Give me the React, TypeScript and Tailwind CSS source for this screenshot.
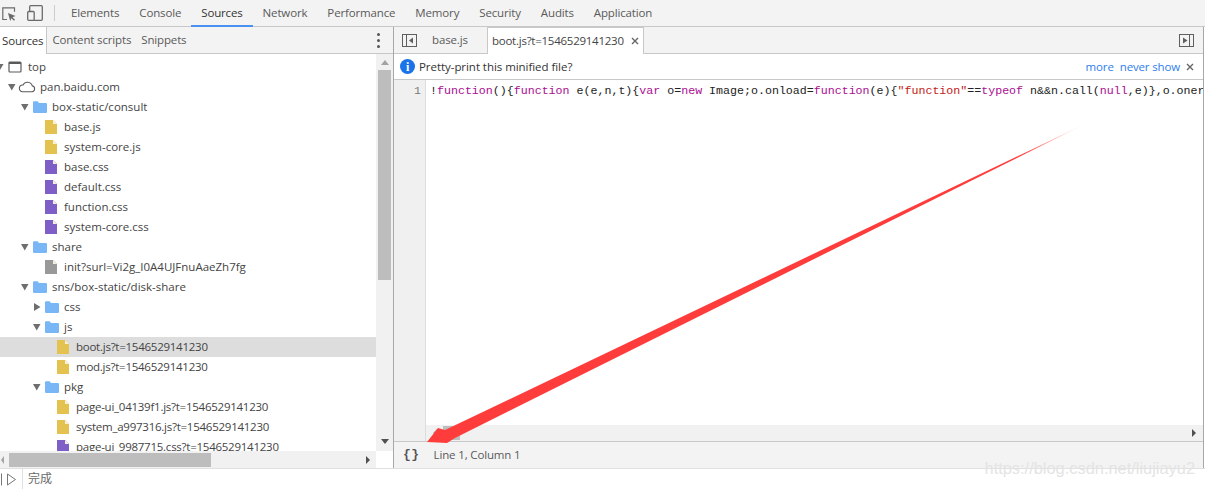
import React from 'react'

const tabs = ['Elements', 'Console', 'Sources', 'Network', 'Performance', 'Memory', 'Security', 'Audits', 'Application']

type Row = { depth: number; kind: string; label: string; arrow?: 'down' | 'right'; selected?: boolean }

const rows: Row[] = [
  { depth: 0, kind: 'frame', label: 'top', arrow: 'down' },
  { depth: 1, kind: 'cloud', label: 'pan.baidu.com', arrow: 'down' },
  { depth: 2, kind: 'folder', label: 'box-static/consult', arrow: 'down' },
  { depth: 3, kind: 'js', label: 'base.js' },
  { depth: 3, kind: 'js', label: 'system-core.js' },
  { depth: 3, kind: 'css', label: 'base.css' },
  { depth: 3, kind: 'css', label: 'default.css' },
  { depth: 3, kind: 'css', label: 'function.css' },
  { depth: 3, kind: 'css', label: 'system-core.css' },
  { depth: 2, kind: 'folder', label: 'share', arrow: 'down' },
  { depth: 3, kind: 'doc', label: 'init?surl=Vi2g_I0A4UJFnuAaeZh7fg' },
  { depth: 2, kind: 'folder', label: 'sns/box-static/disk-share', arrow: 'down' },
  { depth: 3, kind: 'folder', label: 'css', arrow: 'right' },
  { depth: 3, kind: 'folder', label: 'js', arrow: 'down' },
  { depth: 4, kind: 'js', label: 'boot.js?t=1546529141230', selected: true },
  { depth: 4, kind: 'js', label: 'mod.js?t=1546529141230' },
  { depth: 3, kind: 'folder', label: 'pkg', arrow: 'down' },
  { depth: 4, kind: 'js', label: 'page-ui_04139f1.js?t=1546529141230' },
  { depth: 4, kind: 'js', label: 'system_a997316.js?t=1546529141230' },
  { depth: 4, kind: 'css', label: 'page-ui_9987715.css?t=1546529141230' },
]

const fileColors: Record<string, string> = {
  js: '#e3c24f',
  css: '#7e5ec7',
  doc: '#999999',
}

const TreeIcon = ({ kind }: { kind: string }) => {
  if (kind === 'frame') {
    return (
      <svg width="14" height="12" viewBox="0 0 14 12" className="shrink-0">
        <rect x="1" y="1" width="12" height="10" rx="1" fill="none" stroke="#5a5a5a" strokeWidth="1.2" />
        <rect x="1" y="1" width="12" height="2" fill="#5a5a5a" />
      </svg>
    )
  }
  if (kind === 'cloud') {
    return (
      <svg width="18" height="12" viewBox="0 0 18 12" className="-ml-[2px] shrink-0">
        <path
          d="M4.5 10.8h9.5a3 3 0 0 0 .3-5.9A5 5 0 0 0 5 4a3.4 3.4 0 0 0-.5 6.8z"
          fill="none"
          stroke="#5a5a5a"
          strokeWidth="1.1"
        />
      </svg>
    )
  }
  if (kind === 'folder') {
    return (
      <svg width="14" height="12" viewBox="0 0 14 12" className="shrink-0">
        <path d="M0 1.2a1 1 0 0 1 1-1h3.6L6 2h7a1 1 0 0 1 1 1v8a1 1 0 0 1-1 1H1a1 1 0 0 1-1-1z" fill="#78b6f5" />
      </svg>
    )
  }
  return (
    <svg width="12" height="14" viewBox="0 0 12 14" className="shrink-0">
      <path d="M0 0h8l4 4v10H0z" fill={fileColors[kind]} />
      <path d="M8 0l4 4H8z" fill="#f6f0dc" />
    </svg>
  )
}

const Caret = ({ dir }: { dir?: 'down' | 'right' }) => {
  if (!dir) return <span className="w-[12px] shrink-0" />
  return (
    <svg width="8" height="8" viewBox="0 0 8 8" className="mr-[4px] shrink-0">
      {dir === 'down' ? <path d="M0 1h7.5L3.75 7.5z" fill="#6e6e6e" /> : <path d="M1 0v8l6.5-4z" fill="#6e6e6e" />}
    </svg>
  )
}

const TreeRow = ({ row }: { row: Row }) => {
  const indents = ['-ml-[4px]', 'pl-[8px]', 'pl-[21px]', 'pl-[33px]', 'pl-[33px]']
  const labelGap: Record<string, string> = { folder: 'ml-[5px]', frame: 'ml-[6px]', cloud: 'ml-[4px]' }
  // labels full of digits run narrower than plain ones
  const spacing = row.label.includes('?t=') ? 'tracking-[-0.25px]' : 'tracking-[0px]'
  return (
    <div className={`flex h-[20px] shrink-0 items-center whitespace-nowrap ${indents[row.depth]} ${row.selected ? 'bg-[#dddddd]' : ''}`}>
      {row.depth === 4 && <span className="w-[12px] shrink-0" />}
      <Caret dir={row.arrow} />
      <TreeIcon kind={row.kind} />
      <span className={`${labelGap[row.kind] ?? 'ml-[7px]'} ${spacing} text-[#444444]`}>{row.label}</span>
    </div>
  )
}

export default function App() {
  return (
    <div className="relative flex h-[489px] w-[1205px] flex-col overflow-hidden bg-white font-['Open_Sans','Noto_Sans_CJK_SC',sans-serif] text-[11.5px] tracking-[-0.15px] text-[#5a5a5a]">
      {/* main tab bar */}
      <div className="flex h-[27px] shrink-0 items-stretch border-b border-[#c8c8c8] bg-[#f3f3f3]">
        <div className="flex w-[54px] items-center gap-[11px] pl-[2px]">
          <svg width="14" height="14" viewBox="0 0 14 14" className="mt-[1px]">
            <path d="M5 12.5H0.8V0.8h11.7v4" fill="none" stroke="#6a6a6a" strokeWidth="1.2" />
            <path d="M6 6l7.5 3-3 1.2 2.5 2.6-1 1-2.6-2.6-1.2 2.9z" fill="#6a6a6a" />
          </svg>
          <svg width="16" height="16" viewBox="0 0 16 16">
            <rect x="2.7" y="0.7" width="12.6" height="14.6" rx="1" fill="none" stroke="#6a6a6a" strokeWidth="1.3" />
            <rect x="0.7" y="6.5" width="6.5" height="8.8" rx="1" fill="#f3f3f3" stroke="#6a6a6a" strokeWidth="1.3" />
          </svg>
        </div>
        <div className="my-[5px] w-px bg-[#cccccc]" />
        <div className="ml-[6px] flex items-stretch">
          {tabs.map((t) => (
            <div
              key={t}
              className={`-mb-px flex items-center border-b-2 px-[10px] ${t === 'Sources' ? 'border-[#4a90f0] text-[#333333]' : 'border-transparent'}`}
            >
              {t}
            </div>
          ))}
        </div>
      </div>

      <div className="flex min-h-0 flex-1">
        {/* navigator */}
        <div className="flex w-[394px] shrink-0 flex-col border-r border-[#a8a8a8]">
          <div className="flex h-[27px] shrink-0 items-stretch border-b border-[#c8c8c8] bg-[#f3f3f3]">
            <div className="-mb-px flex items-center border-r border-[#c8c8c8] bg-white pl-[2px] pr-[3px] text-[#333333]">Sources</div>
            <div className="flex items-center px-[5px]">Content scripts</div>
            <div className="flex items-center px-[5px]">Snippets</div>
            <div className="ml-auto mr-[13px] flex flex-col justify-center gap-[3px]">
              <span className="size-[3px] rounded-full bg-[#555555]" />
              <span className="size-[3px] rounded-full bg-[#555555]" />
              <span className="size-[3px] rounded-full bg-[#555555]" />
            </div>
          </div>
          <div className="flex min-h-0 flex-1">
            <div className="flex min-w-0 flex-1 flex-col">
              <div className="flex min-h-0 flex-1 flex-col overflow-hidden pt-[3px]">
                {rows.map((r) => (
                  <TreeRow key={r.label + r.depth} row={r} />
                ))}
              </div>
              <div className="flex h-[17px] shrink-0 items-center bg-[#f1f1f1]">
                <svg width="9" height="8" viewBox="0 0 9 8" className="shrink-0">
                  <path d="M1 4l3-4v8z" fill="#a3a3a3" />
                </svg>
                <div className="h-[14px] w-[202px] bg-[#bdbdbd]" />
                <svg width="6" height="8" viewBox="0 0 6 8" className="ml-auto mr-[5px]">
                  <path d="M1 0l4 4-4 4z" fill="#505050" />
                </svg>
              </div>
            </div>
            <div className="flex w-[17px] shrink-0 flex-col bg-white">
              <div className="flex flex-1 flex-col items-center bg-[#f1f1f1]">
                <svg width="8" height="6" viewBox="0 0 8 6" className="mt-[6px] shrink-0">
                  <path d="M4 0l4 5H0z" fill="#a3a3a3" />
                </svg>
                <div className="mt-[4px] h-[210px] w-[13px] bg-[#bdbdbd]" />
                <svg width="8" height="6" viewBox="0 0 8 6" className="mb-[6px] mt-auto shrink-0">
                  <path d="M0 0h8L4 5z" fill="#505050" />
                </svg>
              </div>
              <div className="h-[17px] shrink-0" />
            </div>
          </div>
        </div>

        {/* editor */}
        <div className="mr-px flex min-w-0 flex-1 flex-col border-r border-[#a8a8a8]">
          <div className="flex h-[27px] shrink-0 items-stretch border-b border-[#c8c8c8] bg-[#f3f3f3]">
            <svg width="15" height="13" viewBox="0 0 15 13" className="ml-[8px] self-center">
              <rect x="0.5" y="0.5" width="14" height="12" fill="none" stroke="#5f5f5f" />
              <path d="M4.5 0.5v12" stroke="#5f5f5f" />
              <path d="M11 3.5v6l-4-3z" fill="#5f5f5f" />
            </svg>
            <div className="ml-[7px] flex w-[63px] items-center pl-[8px]">base.js</div>
            <div className="-mb-px flex items-center gap-[7px] border-x border-t border-[#c8c8c8] bg-white pl-[4px] pr-[4px] tracking-[-0.25px] text-[#444444]">
              boot.js?t=1546529141230
              <svg width="8" height="8" viewBox="0 0 8 8">
                <path d="M1 1l6 6M7 1l-6 6" stroke="#666666" strokeWidth="1.4" />
              </svg>
            </div>
            <svg width="15" height="13" viewBox="0 0 15 13" className="ml-auto mr-[9px] self-center">
              <rect x="0.5" y="0.5" width="14" height="12" fill="none" stroke="#5f5f5f" />
              <path d="M10.5 0.5v12" stroke="#5f5f5f" />
              <path d="M4 3.5v6l4.5-3z" fill="#5f5f5f" />
            </svg>
          </div>
          <div className="flex h-[26px] shrink-0 items-center border-b border-[#c8c8c8] pl-[6px] pr-[9px]">
            <span className="flex size-[15px] shrink-0 items-center justify-center rounded-full bg-[#1a73e8] font-['Liberation_Serif',serif] text-[12px] font-bold text-white">
              i
            </span>
            <span className="ml-[4px] tracking-[-0.05px] text-[#333333]">Pretty-print this minified file?</span>
            <span className="ml-auto text-[#2f80ed]">more</span>
            <span className="ml-[6px] text-[#2f80ed]">never show</span>
            <svg width="8" height="8" viewBox="0 0 8 8" className="ml-[6px]">
              <path d="M1 1l6 6M7 1l-6 6" stroke="#666666" strokeWidth="1.4" />
            </svg>
          </div>
          <div className="flex min-h-0 flex-1">
            <div className="w-[32px] shrink-0 border-r border-[#dddddd] bg-[#f0f0f0] pr-[4px] pt-[4px] text-right font-['Liberation_Mono',monospace] text-[11.6px] leading-[14px] tracking-normal text-[#7a7a7a]">
              1
            </div>
            <div className="flex min-w-0 flex-1 flex-col">
              <div className="min-h-0 flex-1 overflow-hidden whitespace-nowrap pl-[4px] pt-[4px] font-['Liberation_Mono',monospace] text-[11.64px] leading-[14px] tracking-normal text-[#222222]">
                !<span className="text-[#aa0d91]">function</span>(){'{'}
                <span className="text-[#aa0d91]">function</span> e(e,n,t){'{'}
                <span className="text-[#aa0d91]">var</span> o=<span className="text-[#aa0d91]">new</span> Image;o.onload=
                <span className="text-[#aa0d91]">function</span>(e){'{'}
                <span className="text-[#c41a16]">"function"</span>==<span className="text-[#aa0d91]">typeof</span> n&&n.call(
                <span className="text-[#aa0d91]">null</span>,e){'}'},o.onerror=
              </div>
              <div className="flex h-[16px] shrink-0 items-center bg-[#f1f1f1]">
                <svg width="6" height="8" viewBox="0 0 6 8" className="ml-[6px]">
                  <path d="M5 0L1 4l4 4z" fill="#a3a3a3" />
                </svg>
                <div className="ml-[5px] h-[14px] w-[17px] bg-[#bdbdbd]" />
                <svg width="6" height="8" viewBox="0 0 6 8" className="ml-auto mr-[6px]">
                  <path d="M1 0l4 4-4 4z" fill="#505050" />
                </svg>
              </div>
            </div>
          </div>
          <div className="flex h-[27px] shrink-0 items-center border-t border-[#c8c8c8] bg-[#f3f3f3] pl-[9px]">
            <span className="font-['Liberation_Mono',monospace] text-[13px] font-bold tracking-[0.5px] text-[#555555]">{'{}'}</span>
            <span className="ml-[14px]">Line 1, Column 1</span>
          </div>
        </div>
      </div>

      {/* browser status bar */}
      <div className="flex h-[21px] shrink-0 items-center border-t border-[#e0e0e0] bg-white">
        <svg width="16" height="13" viewBox="0 0 16 13" className="ml-[1px]">
          <path d="M0.5 0.5v12" stroke="#777777" />
          <path d="M6.5 1v11l8-5.5z" fill="none" stroke="#777777" />
        </svg>
        <div className="ml-[5px] h-full w-px bg-[#e0e0e0]" />
        <span className="ml-[5px] text-[12px] tracking-normal text-[#6a6a6a]">完成</span>
      </div>

      {/* red annotation arrow */}
      <svg width="1205" height="489" className="pointer-events-none absolute left-0 top-0">
        <defs>
          <linearGradient id="arrowFade" x1="1085" y1="124" x2="427" y2="441" gradientUnits="userSpaceOnUse">
            <stop offset="0" stopColor="#ff3c3c" stopOpacity="0.05" />
            <stop offset="0.1" stopColor="#ff3c3c" />
            <stop offset="1" stopColor="#ff3c3c" />
          </linearGradient>
        </defs>
        <path d="M1085 124L455 438L447 443L427 442L438 428L445 430z" fill="url(#arrowFade)" />
      </svg>

      {/* watermark */}
      <div className="pointer-events-none absolute bottom-[8px] right-[10px] font-['Liberation_Sans',sans-serif] text-[16.4px] tracking-normal text-[#e4e4e4]">
        https://blog.csdn.net/liujiayu2
      </div>
    </div>
  )
}
